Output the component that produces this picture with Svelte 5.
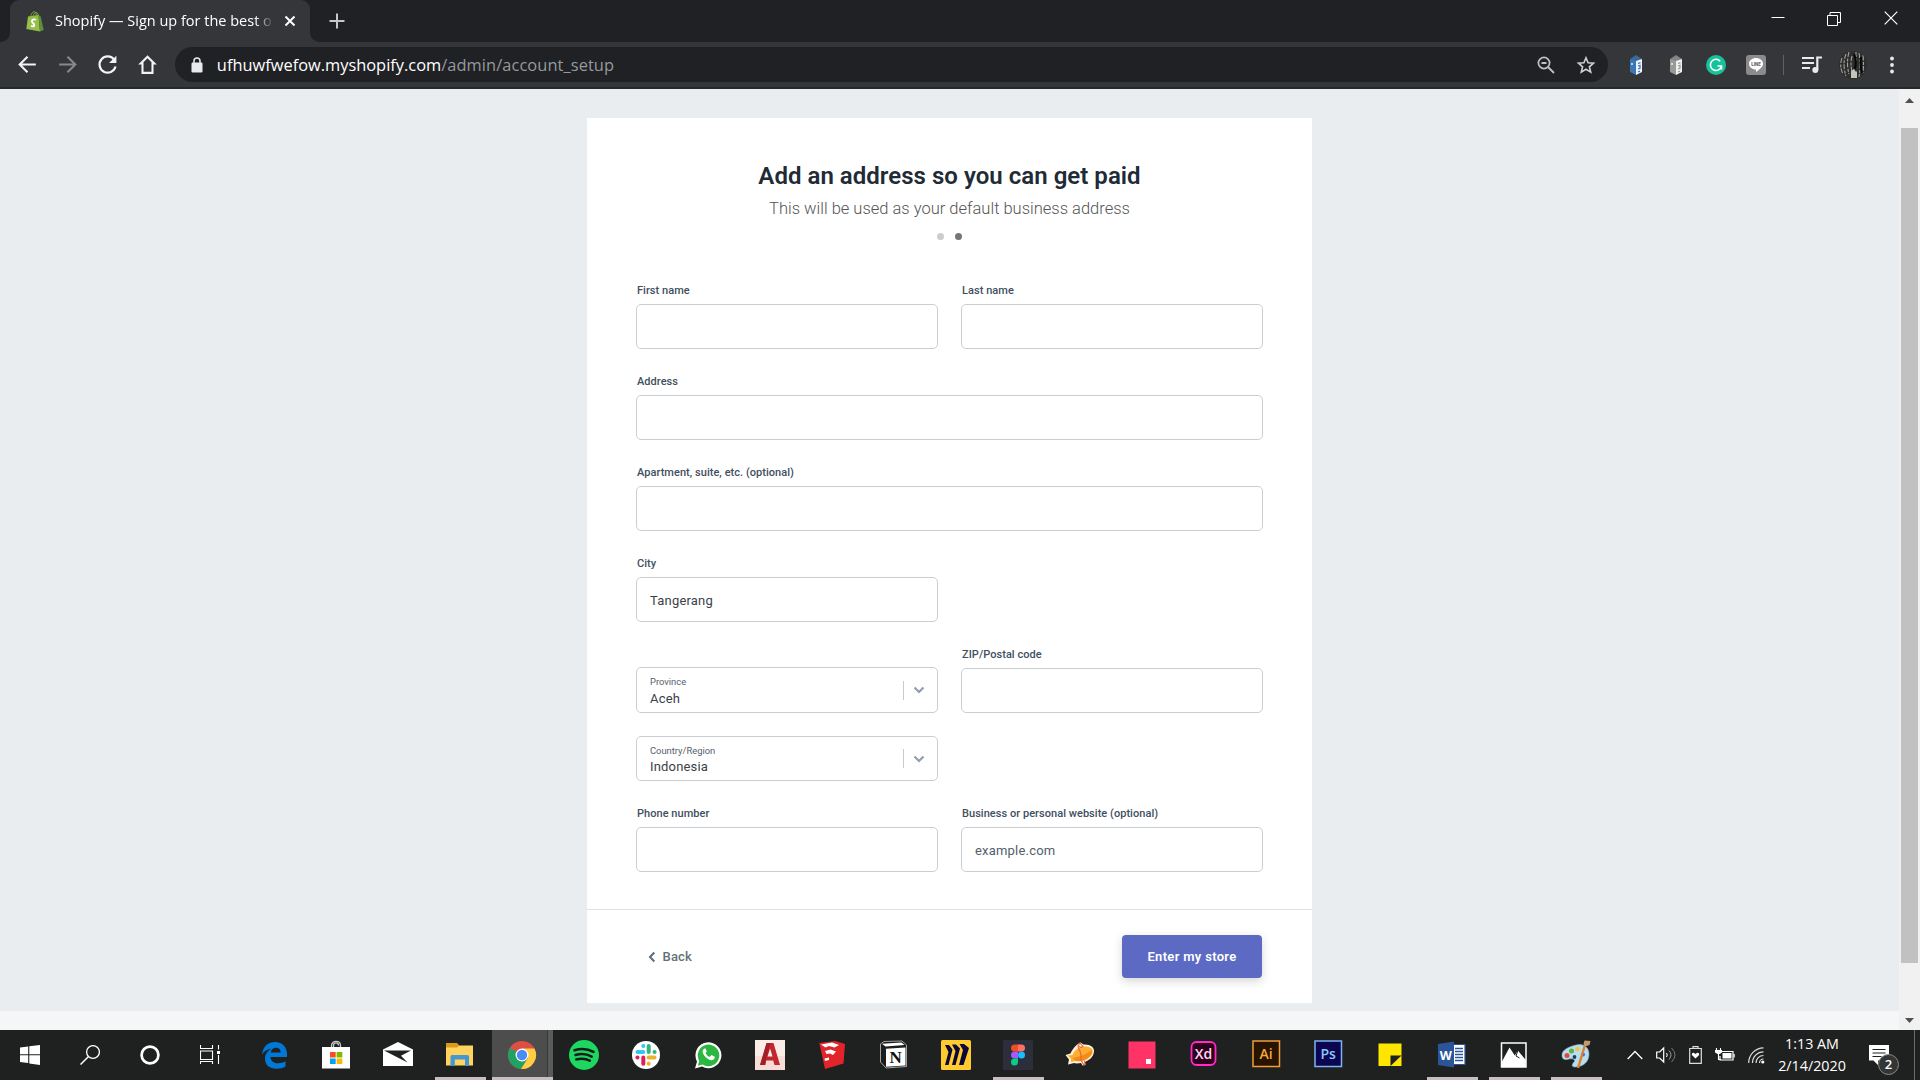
<script>
  const apps = [
    { id: 'edge' }, { id: 'store' }, { id: 'mail' }, { id: 'explorer', open: true },
    { id: 'chrome', open: true, active: true }, { id: 'spotify' }, { id: 'slack' },
    { id: 'whatsapp' }, { id: 'autocad' }, { id: 'sketchup' }, { id: 'notion' },
    { id: 'miro' }, { id: 'figma', open: true }, { id: 'zeplin' }, { id: 'invision' },
    { id: 'xd' }, { id: 'ai' }, { id: 'ps' }, { id: 'notes' }, { id: 'word', open: true },
    { id: 'photos', open: true }, { id: 'paint', open: true }
  ];
  let city = $state('Tangerang');
</script>

{#snippet field(label, wide = false, value = '', placeholder = '')}
  <label class="field" class:wide>
    <span class="label">{label}</span>
    <input {value} {placeholder} />
  </label>
{/snippet}

{#snippet select(label, value)}
  <div class="select">
    <div class="select-text">
      <span class="select-label">{label}</span>
      <span class="select-value">{value}</span>
    </div>
    <span class="select-rule"></span>
    <svg class="chev" viewBox="0 0 12 8" width="12" height="8"><path d="M1.500 1.500 6 6l4.500-4.500" fill="none" stroke="#919eab" stroke-width="2.200" /></svg>
  </div>
{/snippet}

{#snippet extension(main, side)}
  <svg class="tool ext" viewBox="0 0 20 22" width="20" height="22">
    <path d="M4 5 10 1l6 4-6 3z" fill={main} opacity=".8" />
    <path d="M4 5l6 2v14l-6-3z" fill={main} />
    <path d="M10 7l6-2v13l-6 3z" fill={side} />
    <path d="M12 9.500l2.500-.8M12 12l2-.7v3l-2 .7M12 18l2-.8" stroke={main} stroke-width="1.300" fill="none" />
    <path d="M6 9v2" stroke="#fff" stroke-width="1.300" />
  </svg>
{/snippet}

{#snippet appIcon(id)}
  <svg viewBox="0 0 30 30" width="30" height="30">
    {#if id === 'edge'}
      <path d="M3 14.500C4 6 9.500 2 16 2c7.500 0 12 5.500 12 12v3H11.500c0 4 3.500 6.300 7.500 6.300 3 0 5.500-.8 7.500-2v5.300c-2.500 1.500-5.500 2.200-8.700 2.200C10 28.800 6 24.500 6 18.500c0-4.500 2.500-8 6.500-9.800C8.500 9 5 11 3 14.500zM11.700 12.500h10c0-3-1.700-4.700-4.700-4.700-2.900 0-4.800 1.900-5.300 4.700z" fill="#0078d7" />
    {:else if id === 'store'}
      <path d="M10.500 9V5.500C10.500 0 19.500 0 19.500 5.500V9M12.500 7V5.500c0-3.500 5-3.500 5 0" fill="none" stroke="#c8c8c8" stroke-width="1.300" />
      <path d="M1 7h28v21.500H1z" fill="#fff" />
      <path d="M9 12h5.700v5.500H9z" fill="#f25022" /><path d="M15.600 12h5.700v5.500h-5.700z" fill="#7fba00" />
      <path d="M9 18.500h5.700V24H9z" fill="#00a4ef" /><path d="M15.600 18.500h5.700V24h-5.700z" fill="#ffb900" />
    {:else if id === 'mail'}
      <path d="M0 9.500 15 2l15 7.500V26H0z" fill="#fff" />
      <path d="M1 10.500h27l-10 5.200 6.500 6.800z" fill="#1f2121" />
    {:else if id === 'explorer'}
      <path d="M1 3.500h11l2 2h14v20H1z" fill="#ffd35c" /><path d="M1 3h11l2 2.500-2 2H1z" fill="#d99a18" />
      <path d="M5.500 26V16.500q0-1.500 1.500-1.500h15.500q1.500 0 1.500 1.500V26h-4v-6.500H9.800V26z" fill="#4496d4" />
    {:else if id === 'chrome'}
      <circle cx="15" cy="15" r="14" fill="#dd4f43" />
      <path d="M15 15 2.900 8A14 14 0 0 0 14 29l7-11z" fill="#1ea362" />
      <path d="M15 8.500h12.400A14 14 0 0 1 14 29l7-11z" fill="#ffce44" />
      <circle cx="15" cy="15" r="6.500" fill="#fff" /><circle cx="15" cy="15" r="5.200" fill="#4c8bf5" />
    {:else if id === 'spotify'}
      <circle cx="15" cy="15" r="15" fill="#1ed760" />
      <path d="M5.500 10.300c6.500-2 13.500-1.400 19 1.600M6.500 15c5.700-1.600 11.500-1 16.200 1.600M7.300 19.400c4.700-1.200 9.500-.9 13.500 1.300" fill="none" stroke="#171b19" stroke-width="2.500" stroke-linecap="round" />
    {:else if id === 'slack'}
      <circle cx="15" cy="15" r="14" fill="#fff" />
      <g fill="none" stroke-width="4" stroke-linecap="round">
        <path d="M12.300 6v.1M6.500 12h5.800" stroke="#36c5f0" /><path d="M17.700 6v6M23.500 12h.1" stroke="#2eb67d" />
        <path d="M17.700 17.500h5.800M17.700 23.700v-.1" stroke="#ecb22e" /><path d="M12.300 17.500v6.200M6.500 17.500h-.1" stroke="#e01e5a" />
      </g>
    {:else if id === 'whatsapp'}
      <path d="M2 28.500 4 21.500A13 13 0 1 1 9 26.600z" fill="#fff" />
      <path d="M4.800 25.800 6.300 21A10.800 10.800 0 1 1 9.700 24.500z" fill="#2cb742" />
      <path d="M11.500 8.500c-3 1.500-2 5.500 1 8.500s7 4.500 9 1.500l.3-1.800-3.300-1.600-1.700 1.800c-2-.8-3.400-2.200-4.300-4l1.300-1.500-1.300-3z" fill="#fff" />
    {:else if id === 'autocad'}
      <path d="M0 0h30v30H0z" fill="#fbece7" /><path d="M0 16h30v14H0z" fill="#f7ddd6" />
      <path d="M11.500 3h7L25 25h-5.500l-1.300-4.500h-7L10.500 25H5z" fill="#c2262e" />
      <path d="M15 8.500 12.500 16.500h5z" fill="#fbece7" /><path d="M11.500 3h4L9.500 25H5z" fill="#8f1b22" opacity=".65" />
    {:else if id === 'sketchup'}
      <path d="M2.300 3 18 1l10 3-1.500 19.500L8 29z" fill="#e2252b" />
      <path d="m4 4.500 11-2 7 2.500-4.500 2.500L12 6 8.500 7.500zM8 11l5.500-1.500 5.500 2-3 3.500-3-1.500-3.500.5zM7.500 18.500l4.500-1v2.500l-4 1zM20 8l4.500-1.500" fill="#fff" />
    {:else if id === 'notion'}
      <path d="M1.500 4 5 1.500 23 1l4.500 4v21.500L7 28l-5.500-6z" fill="#1d1d1d" stroke="#c4c4c4" stroke-width=".8" />
      <path d="M3 3.800 22.500 2.500l3 2.500L6.500 6.500z" fill="#fff" />
      <path d="M7 8.700 26.500 7.500v18L7 26.800z" fill="#fff" />
      <text x="16.700" y="22.800" text-anchor="middle" font-family="Liberation Serif, serif" font-size="17" font-weight="700" fill="#111">N</text>
    {:else if id === 'miro'}
      <rect width="30" height="30" rx="1.500" fill="#ffcb2f" />
      <path d="M4 5h4l3.500 4.500L7.500 25H4L7.500 12zM11 4.500h4l4 4L14.500 25H11l3.500-14zM18.500 4h4.500l5 4L22.500 25h-4.500l4-15z" fill="#0a0938" />
    {:else if id === 'figma'}
      <rect width="30" height="30" rx="1" fill="#2c2e3c" />
      <path d="M15 4.500h-3.500a3.500 3.500 0 0 0 0 7H15z" fill="#f24e1e" /><path d="M15 4.500h3.500a3.500 3.500 0 0 1 0 7H15z" fill="#ff7262" />
      <path d="M15 11.500h-3.500a3.500 3.500 0 0 0 0 7H15z" fill="#a259ff" /><circle cx="18.500" cy="15" r="3.500" fill="#1abcfe" />
      <path d="M15 18.500h-3.500A3.500 3.500 0 1 0 15 22z" fill="#0acf83" />
    {:else if id === 'zeplin'}
      <path d="m.5 15 5-1.500C8 8 12 4 15.500 2.500l3 2C25 4 29.500 7 29 11.500c-.5 6-5.500 9-9 10.500l.5 3-3 .5-1.500-2.500c-3 .5-5.500.5-7 0L3 24.500l1-5z" fill="#fff1da" />
      <path d="m2.500 15.500 5-.5C10 9 15 6 21 6.500c6 .5 8 4 6 8-3 5-10 7.500-16 6.500l-5 1L6 18.500z" fill="#fdae33" />
      <path d="M7.500 18c7-1 14-3.500 19.500-8 0 7-7 12-16 11z" fill="#f58a1d" />
      <path d="m13 6 2-3 3 3.500-2 1zM16 20l2.500 4.500 1.500-.5-.5-3.500M13 7q4 7 3 13" fill="none" stroke="#e8623a" stroke-width="1.100" />
    {:else if id === 'invision'}
      <path d="M1.500 1.500h27v27h-27z" fill="#ff3366" /><path d="M19 19h5v5h-5z" fill="#fff" />
    {:else if id === 'xd'}
      <rect x="2.500" y="2" width="24" height="23" rx="5" fill="#2e001e" stroke="#ff2bc2" stroke-width="1.800" />
      <text x="14.500" y="18.500" text-anchor="middle" class="adobe" fill="#ffd9f2">Xd</text>
    {:else if id === 'ai'}
      <path d="M2 1h26.500v25.500H2z" fill="#261300" stroke="#f29d38" stroke-width="1.500" />
      <text x="15.200" y="18.500" text-anchor="middle" class="adobe" fill="#f9a63f">Ai</text>
    {:else if id === 'ps'}
      <path d="M2 1h26.500v25.500H2z" fill="#0c0550" stroke="#7cb5f0" stroke-width="1.500" />
      <text x="15.200" y="18.500" text-anchor="middle" class="adobe" fill="#8bc6fc">Ps</text>
    {:else if id === 'notes'}
      <path d="M3.500 3.500h23V26h-23z" fill="#ffe600" /><path d="M15.500 15.500h11L15.500 26z" fill="#1f2121" />
    {:else if id === 'word'}
      <path d="M15 4.500h13v20H15z" fill="#fff" stroke="#2a5699" stroke-width="1.200" />
      <path d="M18 8.500h8M18 11.500h8M18 14.500h8M18 17.500h8M18 20.500h8" stroke="#2a5699" stroke-width="1.500" />
      <path d="M1 4 17 1.500v26L1 25z" fill="#2a5699" />
      <text x="8.800" y="19.500" text-anchor="middle" font-family="Open Sans, sans-serif" font-size="12.500" font-weight="700" fill="#fff">W</text>
    {:else if id === 'photos'}
      <path d="M2.500 3H27v24H2.500z" fill="#1f2121" stroke="#fff" stroke-width="1.500" />
      <path d="M3 21.500 10.500 7.500l5.300 8 3-5 8 9.500V27H3z" fill="#fff" /><path d="m19 10-2 6 3.500 2" fill="none" stroke="#1f2121" />
    {:else if id === 'paint'}
      <path d="M15 5c7-2 13 2 13 9 0 8-6 13-14 13-4 0-3-3-1-5s-1-4-5-3-7 1-7-4S7 7 15 5z" fill="#b9dcef" stroke="#7fb2cf" stroke-width=".6" />
      <circle cx="6" cy="15.500" r="2.500" fill="#e04a3a" /><circle cx="10.500" cy="11" r="2.500" fill="#58b548" /><circle cx="16.500" cy="9" r="2.300" fill="#f2c838" />
      <circle cx="13.500" cy="17" r="1.900" fill="#17405c" /><circle cx="22" cy="14.500" r="2" fill="#3a6fd0" />
      <path d="M17 28 24 5" stroke="#d9812e" stroke-width="2.400" /><path d="m22.500 4 1-3.500 6 .5-1 4-4.500 1.500z" fill="#c49a6c" />
    {/if}
  </svg>
{/snippet}

<div class="screen">
  <div class="tabs">
    <div class="tab">
      <svg class="bag" viewBox="0 0 18 21" width="18" height="21">
        <path d="M2 5.500 12.500 4l1.500 16.500L.3 18z" fill="#95bf47" /><path d="m12.500 4 2.200 1.500L17.700 19 14 20.500z" fill="#5e8e3e" />
        <path d="M4.500 6.500C5 2 7.500 0 9 1c1.200.8 1.500 2.500 1.300 4.500M7 5.500C7.500 3 9 1 10.500 1.500S12.500 4 12.500 5" fill="none" stroke="#7fae3c" />
        <path d="M10 8.800C7.500 7.500 5.500 9 6 10.800c.4 1.500 2.500 1.800 2.300 3.500-.2 1.500-2 1.400-3.300.5" fill="none" stroke="#fff" stroke-width="1.800" />
      </svg>
      <span class="tab-title">Shopify — Sign up for the best o</span>
      <svg class="tab-close" viewBox="0 0 12 12" width="12" height="12"><path d="m1.500 1.500 9 9m0-9-9 9" stroke="#fff" stroke-width="2" /></svg>
    </div>
    <svg class="new-tab" viewBox="0 0 16 16" width="16" height="16"><path d="M8 .5v15M.5 8h15" stroke="#c5c7ca" stroke-width="2" /></svg>
    <div class="win">
      <svg viewBox="0 0 14 14" width="14" height="14"><path d="M.5 6.500h13" stroke="#fff" /></svg>
      <svg viewBox="0 0 14 14" width="14" height="14"><path d="M.5 3.500h10v10H.5zM3 3.500v-3h10.500v10h-3" fill="none" stroke="#fff" /></svg>
      <svg viewBox="0 0 14 14" width="14" height="14"><path d="m.7.7 12.600 12.600m0-12.600L.7 13.300" stroke="#fff" stroke-width="1.200" /></svg>
    </div>
  </div>

  <div class="toolbar">
    <div class="nav">
      <svg viewBox="0 0 24 24" width="25" height="25"><path d="M20 12H5m7-7.500L4.500 12l7.500 7.500" fill="none" stroke="#f1f3f4" stroke-width="2" /></svg>
      <svg viewBox="0 0 24 24" width="25" height="25"><path d="M4 12h15m-7-7.500 7.500 7.500-7.500 7.500" fill="none" stroke="#86888b" stroke-width="2" /></svg>
      <svg viewBox="0 0 24 24" width="25" height="25"><path d="M18.500 7.500A7.800 7.800 0 1 0 19.700 14" fill="none" stroke="#f1f3f4" stroke-width="2.100" /><path d="M20.500 3.500v7h-7z" fill="#f1f3f4" /></svg>
      <svg viewBox="0 0 24 24" width="25" height="25"><path d="M12 4.500 5.500 11h1.700v9h9.600v-9h1.700z" fill="none" stroke="#f1f3f4" stroke-width="2" /></svg>
    </div>
    <div class="omnibox">
      <svg class="lock" viewBox="0 0 12 16" width="12" height="16"><rect x=".5" y="5.500" width="11" height="10" rx="1.200" fill="#e8eaed" /><path d="M3 6V4a3 3 0 0 1 6 0v2" fill="none" stroke="#e8eaed" stroke-width="1.500" /></svg>
      <span class="url">ufhuwfwefow.myshopify.com<span>/admin/account_setup</span></span>
      <svg class="magnify" viewBox="0 0 18 18" width="18" height="18"><circle cx="7" cy="7" r="5.600" fill="none" stroke="#bdc1c6" stroke-width="1.700" /><path d="M4.500 7h5M11 11l6 6" stroke="#bdc1c6" stroke-width="1.800" /></svg>
      <svg viewBox="0 0 20 20" width="20" height="20"><path d="m10 2.800 2.100 5 5.400.4-4.100 3.600 1.300 5.300-4.700-2.900-4.700 2.900 1.300-5.300-4.100-3.600 5.400-.4z" fill="none" stroke="#cdd0d4" stroke-width="1.600" /></svg>
    </div>
    <div class="tools">
      {@render extension('#3b76b5', '#eef5fb')}
      {@render extension('#999', '#f0f0f0')}
      <svg class="tool" viewBox="0 0 20 20" width="20" height="20"><circle cx="10" cy="10" r="10" fill="#15c39a" /><path d="M14.200 6.200A5.600 5.600 0 1 0 15.500 11h-4M15.500 11v3.500" fill="none" stroke="#fff" stroke-width="1.600" /></svg>
      <svg class="tool" viewBox="0 0 20 20" width="20" height="20"><rect width="20" height="20" rx="3" fill="#8b8b8b" /><path d="M10 3c4 0 7 2.500 7 5.700 0 3.300-4 6.200-7 8.300v-2.500c-4 0-7-2.600-7-5.800S6 3 10 3z" fill="#fff" /><text x="10" y="10.800" text-anchor="middle" font-family="Roboto, sans-serif" font-size="4.500" font-weight="900" fill="#666">LINE</text></svg>
      <span class="rule"></span>
      <svg class="tool music" viewBox="0 0 20 18" width="20" height="18"><path d="M0 2h12M0 7h12M0 12h8" stroke="#e8eaed" stroke-width="2" /><path d="M15.300 14V1.500H20" fill="none" stroke="#e8eaed" stroke-width="2.200" /><circle cx="13.300" cy="14" r="3" fill="#e8eaed" /></svg>
      <svg class="avatar" viewBox="0 0 28 28" width="28" height="28">
        <defs><clipPath id="round"><circle cx="14" cy="14" r="14" /></clipPath></defs>
        <g clip-path="url(#round)"><path d="M0 0h28v28H0z" fill="#2e2e2c" />
          <path d="M3 7q-3 8 1 16M7 3Q3 13 7 25M10 1Q7 12 10 23M13 5q-2 8 0 15M20 2q2 12 0 24M24 4q1 10 0 18M17 1v9" fill="none" stroke="#a2a2a0" stroke-width="1.100" stroke-dasharray="5 1.500 3 1" />
          <path d="M15 3q3 7 1 15M22 6q-1 9 1 16" fill="none" stroke="#050505" stroke-width="2" /><path d="M12 20l3-2 2 3 1-1v7h-6z" fill="#c4c4be" /></g>
      </svg>
      <svg class="dots" viewBox="0 0 4 18" width="4" height="18"><g fill="#e8eaed"><circle cx="2" cy="2.500" r="1.900" /><circle cx="2" cy="9" r="1.900" /><circle cx="2" cy="15.500" r="1.900" /></g></svg>
    </div>
  </div>

  <div class="viewport">
    <div class="page">
      <main class="backdrop">
        <section class="card">
          <header>
            <h1>Add an address so you can get paid</h1>
            <p>This will be used as your default business address</p>
            <div class="steps"><i></i><i class="on"></i></div>
          </header>
          <form>
            {@render field('First name')}
            {@render field('Last name')}
            {@render field('Address', true)}
            {@render field('Apartment, suite, etc. (optional)', true)}
            {@render field('City', false, city)}
            <span></span>
            {@render select('Province', 'Aceh')}
            {@render field('ZIP/Postal code')}
            <div class="country">{@render select('Country/Region', 'Indonesia')}</div>
            {@render field('Phone number')}
            {@render field('Business or personal website (optional)', false, '', 'example.com')}
          </form>
          <footer>
            <a class="back" href="#back"><svg viewBox="0 0 8 12" width="8" height="12"><path d="M6.300 1.500 2 6l4.300 4.500" fill="none" stroke="#5f6c78" stroke-width="2" /></svg>Back</a>
            <button type="button">Enter my store</button>
          </footer>
        </section>
      </main>
    </div>
    <div class="scrollbar">
      <svg viewBox="0 0 9 5" width="9" height="5"><path d="M0 5 4.500 0 9 5z" fill="#505050" /></svg>
      <div class="thumb"></div>
      <svg class="down" viewBox="0 0 9 5" width="9" height="5"><path d="M0 0h9L4.500 5z" fill="#505050" /></svg>
    </div>
  </div>

  <div class="taskbar">
    <div class="system">
      <svg viewBox="0 0 20 20" width="20" height="20"><path d="M0 2.600 8.200 1.500v7.700H0zM9.300 1.300 20 0v9.200H9.300zM0 10.300h8.200V18L0 17zM9.300 10.300H20V20L9.300 18.500z" fill="#fff" /></svg>
      <svg viewBox="0 0 20 20" width="20" height="20"><circle cx="13" cy="7" r="6.400" fill="none" stroke="#fff" stroke-width="1.300" /><path d="M8.500 11.500.5 19.500" stroke="#fff" stroke-width="1.500" /></svg>
      <svg viewBox="0 0 20 20" width="20" height="20"><circle cx="10" cy="10" r="8.400" fill="none" stroke="#fff" stroke-width="2.700" /></svg>
      <svg viewBox="0 0 20 20" width="20" height="20"><path d="M.5 0v3.500h12V0M.5 6h12v8.500H.5zM.5 19v-2.500h12V19M18.500 0v4.500M18.500 10v9" fill="none" stroke="#fff" stroke-width="1.100" /><path d="M17 6h3v3h-3z" fill="#fff" /></svg>
    </div>
    <div class="apps">
      {#each apps as app}
        <div class="app" class:open={app.open} class:active={app.active}>{@render appIcon(app.id)}</div>
      {/each}
    </div>
    <div class="tray">
      <svg viewBox="0 0 16 10" width="16" height="10"><path d="m.7 9 7.300-7.500L15.300 9" fill="none" stroke="#fff" stroke-width="1.300" /></svg>
      <svg viewBox="0 0 20 18" width="20" height="18"><path d="M.7 6h3l4-4v14l-4-4h-3z" fill="none" stroke="#fff" stroke-width="1.200" /><path d="M10.500 7q1.500 2 0 4" fill="none" stroke="#fff" /><path d="M13 4.500q4 4.500 0 9" fill="none" stroke="#999" /><path d="M15.500 2q7 7 0 14" fill="none" stroke="#777" /></svg>
      <svg viewBox="0 0 13 18" width="13" height="18"><path d="M.7 2.500h11.600v14.800H.7zM4 2V.7h5V2" fill="none" stroke="#ddd" stroke-width="1.200" /><path d="M6.500 12.500 2.800 9q-.3-2.500 2-2.300l1.700 1.200 1.700-1.200q2.300-.2 2 2.300z" fill="#fff" /></svg>
      <svg viewBox="0 0 20 14" width="20" height="14"><path d="M5 5.500V3.500h13V12H5V8" fill="none" stroke="#fff" stroke-width="1.200" /><path d="M7.500 5h9v5.500h-9zM18.500 6h1.200v3.500h-1.200zM0 2h7v2.500L4.500 6h-2L0 4.500z" fill="#fff" /><path d="M1.500 0v3M5.500 0v3M3.500 5v6.500H6" stroke="#fff" stroke-width="1.100" fill="none" /></svg>
      <svg viewBox="0 0 17 17" width="17" height="17"><g fill="none" stroke="#ddd" stroke-width="1.200"><path d="M.7 16A15 15 0 0 1 15.500.8M4.500 16A11 11 0 0 1 15.500 4.800M8 16a7.500 7.500 0 0 1 7.500-7.500M11.500 16a4 4 0 0 1 4-4" /></g><circle cx="14.800" cy="15" r="1.600" fill="#fff" /></svg>
    </div>
    <div class="clock"><span>1:13 AM</span><span>2/14/2020</span></div>
    <div class="notice">
      <svg viewBox="0 0 20 21" width="20" height="21"><path d="M0 0h20v15.500H9V20l-4.500-4.500H0z" fill="#fff" /><path d="M3.500 4.500h13M3.500 8h13M3.500 11.500h9" stroke="#1f2121" stroke-width="1.200" /></svg>
      <span class="badge">2</span>
    </div>
    <span class="edge"></span>
  </div>
</div>

<style>
  :global(body) { margin: 0; overflow: hidden; }
  * { box-sizing: border-box; }
  svg { display: block; flex: none; }
  .screen { width: 1920px; height: 1080px; display: flex; flex-direction: column; overflow: hidden; font-family: Roboto, 'Liberation Sans', sans-serif; }

  .tabs { height: 42px; flex: none; background: #202124; display: flex; align-items: center; padding-left: 10px; }
  .tab { position: relative; width: 300px; height: 42px; background: #35363a; border-radius: 9px 9px 0 0; display: flex; align-items: center; padding-left: 16px; font: 14.500px 'Open Sans', sans-serif; color: #fff; }
  .tab::before, .tab::after { content: ''; position: absolute; bottom: 0; width: 9px; height: 9px; }
  .tab::before { left: -9px; background: radial-gradient(circle at 0 0, transparent 8.5px, #35363a 9px); }
  .tab::after { right: -9px; background: radial-gradient(circle at 100% 0, transparent 8.5px, #35363a 9px); }
  .tab-title { width: 219px; margin-left: 11px; padding-bottom: 2px; white-space: nowrap; -webkit-mask-image: linear-gradient(90deg, #000 200px, transparent 219px); mask-image: linear-gradient(90deg, #000 200px, transparent 219px); }
  .tab-close { margin-left: 10px; }
  .new-tab { margin-left: 19px; }
  .win { margin-left: auto; display: flex; gap: 42.500px; padding: 0 22px 6px 0; }
  .win svg:nth-child(2) { margin: 1px .5px 0 -.5px; }

  .toolbar { height: 47px; flex: none; background: #35363a; border-bottom: 2px solid #27282b; display: flex; align-items: center; padding: 0 26px 0 15px; }
  .nav { display: flex; gap: 15px; width: 160px; }
  .omnibox { width: 1434px; height: 35px; border-radius: 18px; background: #202124; display: flex; align-items: center; padding: 0 12px 0 16px; }
  .lock { margin-right: 14px; }
  .url { font: 16.400px 'Open Sans', sans-serif; color: #fff; flex: 1; }
  .url span { color: #96999d; letter-spacing: .08px; }
  .magnify { margin-right: 21px; }
  .tools { flex: 1; display: flex; align-items: center; padding-left: 18.500px; }
  .tool { margin-right: 20px; }
  .rule { width: 1px; height: 20px; background: #606164; margin: 0 18px 0 -3px; }
  .music { margin-right: 17px; }
  .avatar { margin-right: 23px; }

  .viewport { flex: 1; display: flex; min-height: 0; }
  .page { flex: 1; background: #f4f6f8; }
  .backdrop { height: 922px; background: #e9edf0; padding: 29px 0 0 587px; }
  .card { width: 725px; height: 885px; background: #fff; display: flex; flex-direction: column; }
  header { height: 165px; padding-top: 43px; text-align: center; display: flex; flex-direction: column; align-items: center; }
  h1 { margin: 0; font-size: 24px; line-height: 30px; font-weight: 600; color: #212b36; letter-spacing: .03px; }
  header p { margin: 6px 0 0; font-size: 16.500px; line-height: 24px; font-weight: 300; color: #555; }
  .steps { display: flex; gap: 11px; margin-top: 12px; }
  .steps i { width: 7px; height: 7px; border-radius: 50%; background: #ccc; }
  .steps .on { background: #757575; }
  form { flex: 1; display: grid; grid-template-columns: 302px 302px; column-gap: 23px; row-gap: 25px; align-content: start; align-items: end; padding-left: 49px; }
  .field { display: flex; flex-direction: column; gap: 6px; }
  .wide, .country { grid-column: 1 / -1; }
  .country { margin-top: -2px; }
  .label { font-size: 11px; line-height: 14px; padding: 1px 0 0 1px; font-weight: 500; letter-spacing: .04px; color: #414f60; }
  input { width: 100%; height: 45px; border: 1px solid #cbced1; border-radius: 5px; padding: 1px 13px 0; font: 13px Roboto, sans-serif; letter-spacing: .2px; color: #3c4248; background: #fff; outline: 0; }
  input::placeholder { color: #535e6b; opacity: 1; }
  .select { width: 302px; height: 46px; border: 1px solid #cbced1; border-radius: 5px; display: flex; align-items: center; padding: 0 12px 0 13px; }
  .country .select { height: 45px; }
  .select-text { flex: 1; display: flex; flex-direction: column; align-self: flex-start; padding-top: 8px; }
  .select-label { font-size: 9.400px; line-height: 12px; color: #56606d; }
  .select-value { font-size: 13px; line-height: 18px; margin-top: 2px; letter-spacing: .17px; color: #3c4248; }
  .country .select-value { margin-top: 1px; }
  .select-rule { width: 1px; height: 19px; background: #c4cbd1; margin-right: 9px; }
  footer { height: 94px; border-top: 1px solid #dfe3e8; display: flex; align-items: center; justify-content: space-between; padding: 0 50px 0 61px; }
  .back { display: flex; align-items: center; gap: 6.500px; font-size: 13px; font-weight: 500; letter-spacing: .2px; color: #637078; text-decoration: none; }
  footer button { width: 140px; height: 43px; border: 0; border-radius: 4px; background: #5c6ac4; color: #fff; font: 600 13px Roboto, sans-serif; letter-spacing: .32px; padding: 0; box-shadow: 0 3px 10px rgba(0, 0, 0, .17); }

  .scrollbar { width: 21px; background: #f1f1f1; display: flex; flex-direction: column; align-items: center; padding: 9px 1px 7px 0; }
  .thumb { width: 17px; height: 835px; margin-top: 25px; background: #c1c1c1; }
  .down { margin-top: auto; }

  .taskbar { height: 50px; flex: none; background: #1f2121; display: flex; }
  .system { display: flex; align-items: center; gap: 40px; padding: 0 23px 0 20px; }
  .system svg:last-child { margin-top: -1px; }
  .apps { display: flex; }
  .app { position: relative; width: 62px; display: flex; justify-content: center; padding-top: 10px; }
  .open::after { content: ''; position: absolute; left: 6px; bottom: 0; width: 51px; height: 3px; background: #c8bdc1; }
  .active { background: linear-gradient(90deg, transparent 1px, #4d4d4d 1px, #4d4d4d 56px, #393939 56px, #393939 57px, #5a5a5a 57px); }
  .active::after { left: 1px; width: 61px; }
  .adobe { font: 600 14px 'Open Sans', sans-serif; }
  .tray { display: flex; align-items: center; width: 170px; padding-left: 20px; gap: 13px; }
  .clock { width: 70px; font: 14.300px/22px 'Open Sans', sans-serif; color: #fff; display: flex; flex-direction: column; align-items: center; padding-top: 3px; }
  .notice { position: relative; padding: 15px 0 0 22px; }
  .badge { position: absolute; left: 31px; top: 24px; width: 21px; height: 21px; border-radius: 50%; border: 1px solid #8a8a8a; background: #343636; color: #fff; font: 600 13px/19px 'Open Sans', sans-serif; text-align: center; }
  .edge { width: 1px; background: #6b6d6d; margin: 0 5px 0 auto; }
</style>
